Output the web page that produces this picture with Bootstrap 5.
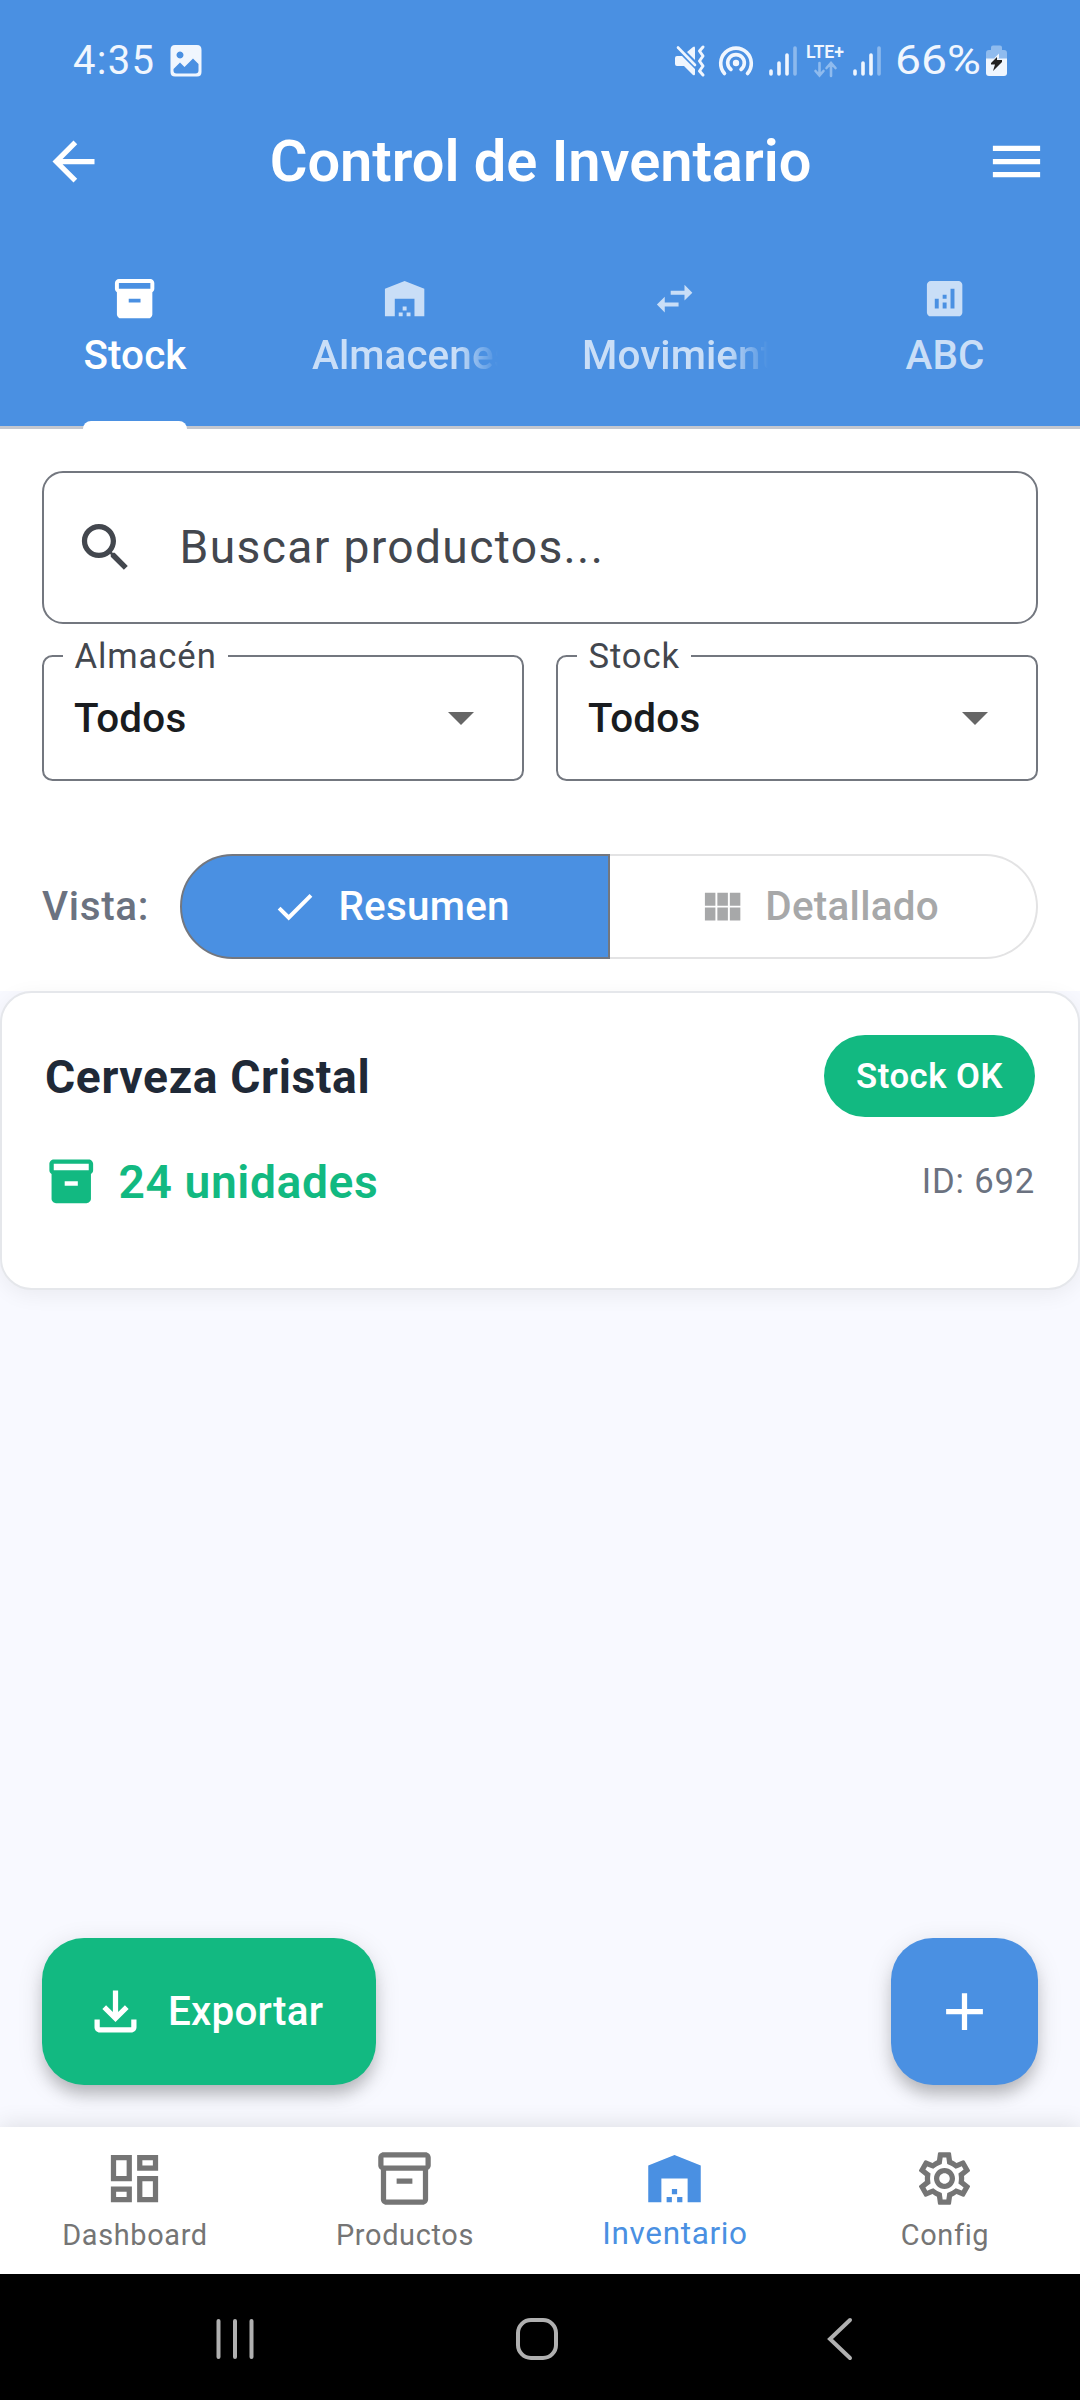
<!DOCTYPE html>
<html lang="es">
<head>
<meta charset="utf-8">
<meta name="viewport" content="width=device-width, initial-scale=1">
<title>Control de Inventario</title>
<link href="https://cdn.jsdelivr.net/npm/bootstrap@5.3.0/dist/css/bootstrap.min.css" rel="stylesheet">
<style>
:root{--blue:#4a90e2;--green:#12b981;--outline:#73777f}
body{font-family:Roboto,"Liberation Sans",sans-serif;width:1080px;height:2400px;background:#f8f9ff;overflow:hidden;line-height:1}
svg{display:block;flex:none;overflow:visible}
.ic{width:63px;height:63px;fill:currentColor}
.ic-sm{width:47.25px;height:47.25px}
.ic-md{width:52.5px;height:52.5px}
.app-head{background:var(--blue);height:429px}
.sys-row{height:120px;padding:1px 73px 0 73px;color:#f0f6fe;font-size:40px;letter-spacing:1.3px}
.title-row{height:83px;padding:0 32px 0 42px}
.title-row h1{font-size:57.75px;font-weight:600;line-height:1;margin:0 9px 0 0}
.title-row svg{margin-top:-1px}
.tabs-row{height:223px}
.tab-cell{flex:0 0 270px;height:226px;padding:72px 42px 0;color:#c9def7;font-size:40.4px;font-weight:500;letter-spacing:.1px}
.tab-cell.on{color:#fff}
.tab-txt{margin-top:10.75px;height:46px;line-height:46px;white-space:nowrap}
.tab-fade{width:186px;overflow:hidden;-webkit-mask-image:linear-gradient(90deg,#000 145px,transparent 186px);mask-image:linear-gradient(90deg,#000 145px,transparent 186px)}
.tab-ink{width:104px;height:8px;background:#fff;border-radius:8px 8px 0 0;margin-top:auto}
.tab-line{height:3px;background:#c3c7cf}
.filters{background:#fff;height:562px;padding:42px 42px 0}
.search-box{height:152.5px;border:2.6px solid var(--outline);border-radius:21px;color:#43474e;font-size:46.2px;padding-left:29.5px;letter-spacing:1.35px}
.search-box span{margin-left:43px}
.select-box{height:126px;border:2.6px solid var(--outline);border-radius:10.5px;margin:0;padding:0 48px 0 30px;position:relative;color:#191c20;font-size:40.4px;font-weight:500;letter-spacing:.26px}
.select-box span{padding-top:2px}
.select-lab{position:absolute;left:18.5px;top:-19px;background:#fff;padding:0 11px 0 12px;height:36px;line-height:36px;font-size:34.65px;font-weight:400;color:#43474e;letter-spacing:.9px}
.vista{color:#6b7280;font-size:40.4px;font-weight:500;letter-spacing:.66px;padding-top:1.500px}
.seg{height:105px;font-size:40.4px;font-weight:500;letter-spacing:.26px}
.seg span{padding-top:1.500px}
.seg-a{width:430px;background:var(--blue);border:2.6px solid var(--outline);border-radius:53px 0 0 53px;color:#fff;padding-right:9px}
.seg-b{width:428px;border:2.6px solid #e3e3e4;border-left:0;border-radius:0 53px 53px 0;color:#a7a8a9;padding-right:8px}
.prod{height:299px;background:#fff;border:2.6px solid #e5e7eb;border-radius:31.5px;padding:42px 43px 0;box-shadow:0 5px 21px rgba(0,0,0,.06)}
.prod-name{font-size:46.2px;font-weight:700;color:#1f2937;letter-spacing:.63px;margin-top:3px}
.pill{height:81.5px;width:211px;background:var(--green);color:#fff;font-size:34.65px;font-weight:600;letter-spacing:.5px;padding-top:1.500px}
.prod-qty{font-size:46.2px;font-weight:600;color:var(--green);letter-spacing:.6px;padding-top:2px}
.prod-id{font-size:34.65px;color:#6b7280;letter-spacing:.8px;padding-top:1px}
.fab{height:147px;border-radius:42px;color:#fff;box-shadow:0 12px 16px -3px rgba(0,0,0,.2),0 6px 26px rgba(0,0,0,.13);font-size:40.4px;font-weight:500;letter-spacing:.2px}
.fab span{padding-top:1.500px}
.fab-exp{width:334px;background:var(--green);padding-left:42px}
.fab-add{width:147px;background:var(--blue)}
.bot-nav{height:147px;background:#fff;box-shadow:0 -3px 21px rgba(0,0,0,.1);color:#757575;font-size:28.9px;letter-spacing:.66px}
.bot-nav>div{flex:0 0 270px;padding-top:20px}
.bot-nav svg{margin-left:-1px}
.sys-nav{height:126px;background:#000}
</style>
</head>
<body class="d-flex flex-column">
<header class="app-head flex-shrink-0">
  <div class="sys-row d-flex align-items-center">
    <span>4:35</span>
    <svg width="32" height="32" viewBox="0 0 32 32" style="margin-left:14.500px"><path fill="#f0f6fe" fill-rule="evenodd" d="M5 0H27Q31.500 0 31.500 5V27Q31.500 31.500 27 31.500H5Q.5 31.500 .5 27V5Q.5 0 5 0ZM10 6.500a3.500 3.500 0 1 0 .01 0ZM3.500 24V25.500Q3.500 28.500 6.500 28.500H25.500Q28.500 28.500 28.500 25.500V19L23 13.500 14.500 22 10 17.500Z"/></svg>
    <svg class="ms-auto" width="30" height="30" viewBox="0 0 30 30" fill="#f0f6fe"><path d="M0 12Q0 10 2 10H7L20 23V28Q20 30 18 29L9 20H2Q0 20 0 18ZM12 6 18 1Q20-.5 20 2V14Z"/><path d="M3 1.500 20 19" fill="none" stroke="#f0f6fe" stroke-width="2.600" stroke-linecap="round"/><path d="M28 1 24.500 5 28 10 24.500 15 28 20 24.500 25 28 29" fill="none" stroke="#f0f6fe" stroke-width="3" stroke-linejoin="round" stroke-linecap="round"/></svg>
    <svg width="35" height="31" viewBox="0 0 35 31" fill="none" stroke="#f0f6fe" stroke-width="3.600" stroke-linecap="round" style="margin-left:14px"><circle cx="17" cy="18" r="3.200" fill="#f0f6fe" stroke="none"/><path d="M5.500 28.500A15.300 15.300 0 1 1 28.500 28.500M12 24.500A8.300 8.300 0 1 1 22 24.500"/></svg>
    <svg width="28" height="30" viewBox="0 0 28 30" stroke="#f0f6fe" stroke-width="3.600" stroke-linecap="round" style="margin-left:15px"><path d="M2 25V28M10 17V28M18 9V28"/><path d="M26 2V28" opacity=".4"/></svg>
    <svg width="38" height="33" viewBox="0 0 38 33" style="margin-left:10px" letter-spacing="0"><text x="-1" y="14" fill="#f0f6fe" font-size="19" font-weight="600" textLength="38" lengthAdjust="spacingAndGlyphs">LTE+</text><path d="M12.500 19V31M8.500 27 12.500 31.500 16.500 27M24 32V20M19.500 24 24 19 28.500 24" fill="none" stroke="#8fbbee" stroke-width="2.600" stroke-linecap="round"/></svg>
    <svg width="28" height="30" viewBox="0 0 28 30" stroke="#f0f6fe" stroke-width="3.600" stroke-linecap="round" style="margin-left:8px"><path d="M2 25V28M10 17V28M18 9V28"/><path d="M26 2V28" opacity=".4"/></svg>
    <svg width="86" height="40" viewBox="0 0 86 40" style="margin-left:14px" letter-spacing="0"><text x="0" y="33" fill="#f0f6fe" font-size="40" textLength="86" lengthAdjust="spacingAndGlyphs">66%</text></svg>
    <svg width="21" height="32" viewBox="0 0 21 32" style="margin-left:5px"><path fill="#8fbbee" d="M5 5V2.500Q5 .5 7 .5H14Q16 .5 16 2.500V5H18Q21 5 21 8V14H0V8Q0 5 3 5Z"/><path fill="#f0f6fe" d="M0 13.500H21V28Q21 31 18 31H3Q0 31 0 28Z"/><path fill="#f0f6fe" d="M8 13.500 13 8.500V13.500Z"/><path fill="#222" d="M11 12 5 18V19.500H9L7 26 16 17V15H11Z"/></svg>
  </div>
  <div class="title-row d-flex align-items-center justify-content-between text-white">
    <svg class="ic" viewBox="0 0 24 24"><path d="M20 11H7.830l5.590-5.590L12 4l-8 8 8 8 1.410-1.410L7.830 13H20v-2z"/></svg>
    <h1>Control de Inventario</h1>
    <svg class="ic" viewBox="0 0 24 24"><path d="M3 18h18v-2H3v2zm0-5h18v-2H3v2zm0-7v2h18V6H3z"/></svg>
  </div>
  <nav class="tabs-row d-flex">
    <div class="tab-cell on d-flex flex-column align-items-center">
      <svg class="ic ic-sm" viewBox="0 0 24 24"><path d="M20 2H4c-1 0-2 .9-2 2v3.010c0 .72.43 1.340 1 1.690V20c0 1.100 1.100 2 2 2h14c.9 0 2-.9 2-2V8.700c.57-.35 1-.97 1-1.690V4c0-1.100-1-2-2-2zm-5 12H9v-2h6v2zm5-7H4V4h16v3z"/></svg>
      <div class="tab-txt">Stock</div><div class="tab-ink"></div>
    </div>
    <div class="tab-cell d-flex flex-column align-items-center">
      <svg class="ic ic-sm" viewBox="0 0 24 24"><path d="M22 21V7L12 3 2 7v14h5v-9h10v9h5zm-11-2H9v2h2v-2zm2-3h-2v2h2v-2zm2 3h-2v2h2v-2z"/></svg>
      <div class="tab-txt tab-fade">Almacenes</div>
    </div>
    <div class="tab-cell d-flex flex-column align-items-center">
      <svg class="ic ic-sm" viewBox="0 0 24 24"><path d="M6.990 11L3 15l3.990 4v-3H14v-2H6.990v-3zM21 9l-3.990-4v3H10v2h7.010v3L21 9z"/></svg>
      <div class="tab-txt tab-fade">Movimientos</div>
    </div>
    <div class="tab-cell d-flex flex-column align-items-center">
      <svg class="ic ic-sm" viewBox="0 0 24 24"><path d="M19 3H5c-1.100 0-2 .9-2 2v14c0 1.100.9 2 2 2h14c1.100 0 2-.9 2-2V5c0-1.100-.9-2-2-2zM9 17H7v-5h2v5zm4 0h-2v-3h2v3zm0-5h-2v-2h2v2zm4 5h-2V7h2v10z"/></svg>
      <div class="tab-txt">ABC</div>
    </div>
  </nav>
  <div class="tab-line"></div>
</header>

<section class="filters flex-shrink-0">
  <div class="search-box d-flex align-items-center">
    <svg class="ic" viewBox="0 0 24 24"><path d="M15.500 14h-.79l-.28-.27C15.410 12.590 16 11.110 16 9.500 16 5.910 13.090 3 9.500 3S3 5.910 3 9.500 5.910 16 9.500 16c1.610 0 3.090-.59 4.230-1.570l.27.28v.79l5 4.990L20.490 19l-4.990-5zm-6 0C7.010 14 5 11.990 5 9.500S7.010 5 9.500 5 14 7.010 14 9.500 11.990 14 9.500 14z"/></svg>
    <span>Buscar productos...</span>
  </div>
  <div class="d-flex" style="gap:32px;margin-top:31.5px">
    <div class="select-box d-flex align-items-center justify-content-between flex-fill">
      <label class="select-lab">Almacén</label><span>Todos</span>
      <svg width="26" height="13" viewBox="0 0 26 13"><path fill="#666" d="M0 0H26L13 13Z"/></svg>
    </div>
    <div class="select-box d-flex align-items-center justify-content-between flex-fill">
      <label class="select-lab">Stock</label><span>Todos</span>
      <svg width="26" height="13" viewBox="0 0 26 13"><path fill="#666" d="M0 0H26L13 13Z"/></svg>
    </div>
  </div>
  <div class="d-flex align-items-center justify-content-between" style="margin-top:73px">
    <span class="vista">Vista:</span>
    <div class="seg d-flex">
      <div class="seg-a d-flex align-items-center justify-content-center"><svg class="ic ic-sm" viewBox="0 0 24 24"><path d="M9 16.170L4.830 12l-1.420 1.410L9 19 21 7l-1.410-1.410z"/></svg><span style="margin-left:20px">Resumen</span></div>
      <div class="seg-b d-flex align-items-center justify-content-center"><svg class="ic ic-sm" viewBox="0 0 24 24"><path d="M14.670 5v6.500H9.330V5h5.340zm1 6.500H21V5h-5.330v6.500zm-1 7.500v-6.500H9.330V19h5.340zm1-6.500V19H21v-6.500h-5.330zm-7.340 0H3V19h5.330v-6.500zm0-1V5H3v6.500h5.330z"/></svg><span style="margin-left:19px">Detallado</span></div>
    </div>
  </div>
</section>

<main class="flex-grow-1 d-flex flex-column">
  <article class="prod">
    <div class="d-flex align-items-center justify-content-between"><span class="prod-name">Cerveza Cristal</span><span class="pill rounded-pill d-flex align-items-center justify-content-center"><span>Stock OK</span></span></div>
    <div class="d-flex align-items-center" style="margin-top:38px"><svg class="ic ic-md" style="color:#12b981" viewBox="0 0 24 24"><path d="M20 2H4c-1 0-2 .9-2 2v3.010c0 .72.43 1.340 1 1.690V20c0 1.100 1.100 2 2 2h14c.9 0 2-.9 2-2V8.700c.57-.35 1-.97 1-1.690V4c0-1.100-1-2-2-2zm-5 12H9v-2h6v2zm5-7H4V4h16v3z"/></svg><span class="prod-qty" style="margin-left:21px">24 unidades</span><span class="prod-id ms-auto">ID: 692</span></div>
  </article>
  <div class="mt-auto d-flex justify-content-between" style="padding:0 42px 42px">
    <div class="fab fab-exp d-flex align-items-center"><svg class="ic" viewBox="0 0 24 24"><path d="M18 15v3H6v-3H4v3c0 1.100.9 2 2 2h12c1.100 0 2-.9 2-2v-3h-2zm-1-4l-1.410-1.410L13 12.170V4h-2v8.170L8.410 9.590 7 11l5 5 5-5z"/></svg><span style="margin-left:21px">Exportar</span></div>
    <div class="fab fab-add d-flex align-items-center justify-content-center"><svg class="ic" viewBox="0 0 24 24"><path d="M19 13h-6v6h-2v-6H5v-2h6V5h2v6h6v2z"/></svg></div>
  </div>
</main>

<nav class="bot-nav d-flex flex-shrink-0">
  <div class="d-flex flex-column align-items-center"><svg class="ic" viewBox="0 0 24 24"><path d="M19 5v2h-4V5h4M9 5v6H5V5h4m10 8v6h-4v-6h4M9 17v2H5v-2h4M21 3h-8v6h8V3zM11 3H3v10h8V3zm10 8h-8v10h8V11zm-10 4H3v6h8v-6z"/></svg><span style="margin-top:10.500px">Dashboard</span></div>
  <div class="d-flex flex-column align-items-center"><svg class="ic" viewBox="0 0 24 24"><path d="M20 2H4c-1 0-2 .9-2 2v3.010c0 .72.43 1.340 1 1.690V20c0 1.100 1.100 2 2 2h14c.9 0 2-.9 2-2V8.700c.57-.35 1-.97 1-1.690V4c0-1.100-1-2-2-2zm-1 18H5V9h14v11zm1-13H4V4h16v3zM9 12h6v2H9z"/></svg><span style="margin-top:10.500px">Productos</span></div>
  <div class="d-flex flex-column align-items-center" style="color:#4a90e2;font-size:31.500px"><svg class="ic" viewBox="0 0 24 24"><path d="M22 21V7L12 3 2 7v14h5v-9h10v9h5zm-11-2H9v2h2v-2zm2-3h-2v2h2v-2zm2 3h-2v2h2v-2z"/></svg><span style="margin-top:8px">Inventario</span></div>
  <div class="d-flex flex-column align-items-center"><svg class="ic" viewBox="0 0 24 24"><path d="M19.430 12.980c.04-.32.07-.64.07-.98 0-.34-.03-.66-.07-.98l2.110-1.650c.19-.15.24-.42.12-.64l-2-3.460c-.09-.16-.26-.25-.44-.25-.06 0-.12.01-.17.03l-2.490 1c-.52-.4-1.080-.73-1.690-.98l-.38-2.650C14.460 2.180 14.250 2 14 2h-4c-.25 0-.46.18-.49.42l-.38 2.650c-.61.25-1.170.59-1.690.98l-2.490-1c-.06-.02-.12-.03-.18-.03-.17 0-.34.09-.43.25l-2 3.460c-.13.22-.07.49.12.64l2.110 1.650c-.04.32-.07.65-.07.98 0 .33.03.66.07.98l-2.110 1.650c-.19.15-.24.42-.12.64l2 3.460c.09.16.26.25.44.25.06 0 .12-.01.17-.03l2.490-1c.52.4 1.080.73 1.690.98l.38 2.650c.03.24.24.42.49.42h4c.25 0 .46-.18.49-.42l.38-2.650c.61-.25 1.170-.59 1.690-.98l2.490 1c.06.02.12.03.18.03.17 0 .34-.09.43-.25l2-3.460c.12-.22.07-.49-.12-.64l-2.110-1.650zm-1.980-1.710c.04.31.05.52.05.73 0 .21-.02.43-.05.73l-.14 1.130.89.7 1.080.84-.7 1.210-1.270-.51-1.040-.42-.9.68c-.43.32-.84.56-1.250.73l-1.060.43-.16 1.130-.2 1.350h-1.400l-.19-1.350-.16-1.130-1.060-.43c-.43-.18-.83-.41-1.230-.71l-.91-.7-1.060.43-1.270.51-.7-1.210 1.080-.84.89-.7-.14-1.130c-.03-.31-.05-.54-.05-.74s.02-.43.05-.73l.14-1.130-.89-.7-1.080-.84.7-1.210 1.270.51 1.040.42.9-.68c.43-.32.84-.56 1.250-.73l1.060-.43.16-1.130.2-1.350h1.390l.19 1.350.16 1.130 1.060.43c.43.18.83.41 1.230.71l.91.7 1.060-.43 1.270-.51.7 1.210-1.070.85-.89.7.14 1.130zM12 8c-2.210 0-4 1.790-4 4s1.790 4 4 4 4-1.790 4-4-1.790-4-4-4zm0 6c-1.100 0-2-.9-2-2s.9-2 2-2 2 .9 2 2-.9 2-2 2z"/></svg><span style="margin-top:10.500px">Config</span></div>
</nav>
<footer class="sys-nav d-flex align-items-center flex-shrink-0" style="padding:4px 227px 0 216px">
  <svg width="38" height="42" viewBox="0 0 38 42" stroke="#b0b0b0" stroke-width="4" stroke-linecap="round"><path d="M2.500 3V39M19 3V39M35.500 3V39"/></svg>
  <svg width="42" height="42" viewBox="0 0 42 42" style="margin-left:262px"><rect x="2" y="2" width="38" height="38" rx="13" fill="none" stroke="#b0b0b0" stroke-width="4"/></svg>
  <svg class="ms-auto" width="26" height="42" viewBox="0 0 26 42"><path d="M23 2 3 21 23 40" fill="none" stroke="#b0b0b0" stroke-width="4" stroke-linecap="round"/></svg>
</footer>
<script src="https://cdn.jsdelivr.net/npm/bootstrap@5.3.0/dist/js/bootstrap.bundle.min.js"></script>
</body>
</html>
